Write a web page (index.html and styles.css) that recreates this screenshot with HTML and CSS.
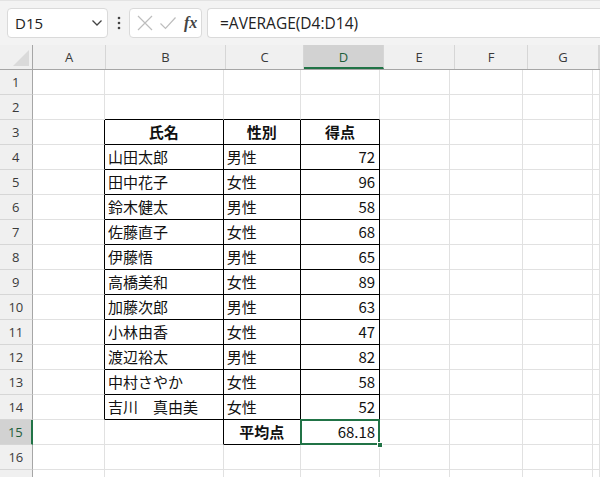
FILE: index.html
```html
<html>

<head>
    <link rel="stylesheet" href="styles.css">
</head>

<body>
    <div class="toolbar">
        <div class="namebox">
            <span>D15</span>
            <svg width="12" height="8" viewBox="0 0 12 8"><path d="M1.5 1.5 L6 6 L10.5 1.5" fill="none" stroke="#444" stroke-width="1.3"/></svg>
        </div>
        <div class="dots">
            <svg width="4" height="14" viewBox="0 0 4 14"><circle cx="2" cy="2" r="1.3" fill="#444"/><circle cx="2" cy="7" r="1.3" fill="#444"/><circle cx="2" cy="12" r="1.3" fill="#444"/></svg>
        </div>
        <div class="editbox">
            <svg width="18" height="18" viewBox="0 0 18 18"><path d="M2 2 L16 16 M16 2 L2 16" stroke="#bdbdbd" stroke-width="1.2"/></svg>
            <svg width="18" height="18" viewBox="0 0 18 18"><path d="M1.5 9.5 L6.5 14.5 L16.5 3.5" fill="none" stroke="#bdbdbd" stroke-width="1.2"/></svg>
            <span class="fx">fx</span>
        </div>
        <div class="formula">=AVERAGE(D4:D14)</div>
    </div>

    <div class="sheet">
        <div class="row head">
            <div class="corner"><div class="tri"></div></div>
            <div class="ch wa">A</div>
            <div class="ch wb">B</div>
            <div class="ch wc">C</div>
            <div class="ch wd sel">D</div>
            <div class="ch we">E</div>
            <div class="ch wf">F</div>
            <div class="ch wg">G</div>
            <div class="ch wh"></div>
        </div>
        <div class="row">
            <div class="rh">1</div>
            <div class="c wa"></div><div class="c wb"></div><div class="c wc"></div><div class="c wd"></div>
            <div class="c we"></div><div class="c wf"></div><div class="c wg"></div><div class="c wh"></div>
        </div>
        <div class="row">
            <div class="rh">2</div>
            <div class="c wa"></div><div class="c wb bb"></div><div class="c wc bb"></div><div class="c wd bb"></div>
            <div class="c we"></div><div class="c wf"></div><div class="c wg"></div><div class="c wh"></div>
        </div>
        <div class="row">
            <div class="rh">3</div>
            <div class="c wa rb"></div>
            <div class="c wb rb bb th">氏名</div>
            <div class="c wc rb bb th">性別</div>
            <div class="c wd rb bb th">得点</div>
            <div class="c we"></div><div class="c wf"></div><div class="c wg"></div><div class="c wh"></div>
        </div>
        <div class="row">
            <div class="rh">4</div>
            <div class="c wa rb"></div>
            <div class="c wb rb bb">山田太郎</div><div class="c wc rb bb">男性</div><div class="c wd rb bb num">72</div>
            <div class="c we"></div><div class="c wf"></div><div class="c wg"></div><div class="c wh"></div>
        </div>
        <div class="row">
            <div class="rh">5</div>
            <div class="c wa rb"></div>
            <div class="c wb rb bb">田中花子</div><div class="c wc rb bb">女性</div><div class="c wd rb bb num">96</div>
            <div class="c we"></div><div class="c wf"></div><div class="c wg"></div><div class="c wh"></div>
        </div>
        <div class="row">
            <div class="rh">6</div>
            <div class="c wa rb"></div>
            <div class="c wb rb bb">鈴木健太</div><div class="c wc rb bb">男性</div><div class="c wd rb bb num">58</div>
            <div class="c we"></div><div class="c wf"></div><div class="c wg"></div><div class="c wh"></div>
        </div>
        <div class="row">
            <div class="rh">7</div>
            <div class="c wa rb"></div>
            <div class="c wb rb bb">佐藤直子</div><div class="c wc rb bb">女性</div><div class="c wd rb bb num">68</div>
            <div class="c we"></div><div class="c wf"></div><div class="c wg"></div><div class="c wh"></div>
        </div>
        <div class="row">
            <div class="rh">8</div>
            <div class="c wa rb"></div>
            <div class="c wb rb bb">伊藤悟</div><div class="c wc rb bb">男性</div><div class="c wd rb bb num">65</div>
            <div class="c we"></div><div class="c wf"></div><div class="c wg"></div><div class="c wh"></div>
        </div>
        <div class="row">
            <div class="rh">9</div>
            <div class="c wa rb"></div>
            <div class="c wb rb bb">高橋美和</div><div class="c wc rb bb">女性</div><div class="c wd rb bb num">89</div>
            <div class="c we"></div><div class="c wf"></div><div class="c wg"></div><div class="c wh"></div>
        </div>
        <div class="row">
            <div class="rh">10</div>
            <div class="c wa rb"></div>
            <div class="c wb rb bb">加藤次郎</div><div class="c wc rb bb">男性</div><div class="c wd rb bb num">63</div>
            <div class="c we"></div><div class="c wf"></div><div class="c wg"></div><div class="c wh"></div>
        </div>
        <div class="row">
            <div class="rh">11</div>
            <div class="c wa rb"></div>
            <div class="c wb rb bb">小林由香</div><div class="c wc rb bb">女性</div><div class="c wd rb bb num">47</div>
            <div class="c we"></div><div class="c wf"></div><div class="c wg"></div><div class="c wh"></div>
        </div>
        <div class="row">
            <div class="rh">12</div>
            <div class="c wa rb"></div>
            <div class="c wb rb bb">渡辺裕太</div><div class="c wc rb bb">男性</div><div class="c wd rb bb num">82</div>
            <div class="c we"></div><div class="c wf"></div><div class="c wg"></div><div class="c wh"></div>
        </div>
        <div class="row">
            <div class="rh">13</div>
            <div class="c wa rb"></div>
            <div class="c wb rb bb">中村さやか</div><div class="c wc rb bb">女性</div><div class="c wd rb bb num">58</div>
            <div class="c we"></div><div class="c wf"></div><div class="c wg"></div><div class="c wh"></div>
        </div>
        <div class="row">
            <div class="rh">14</div>
            <div class="c wa rb"></div>
            <div class="c wb rb bb">吉川　真由美</div><div class="c wc rb bb">女性</div><div class="c wd rb bb num">52</div>
            <div class="c we"></div><div class="c wf"></div><div class="c wg"></div><div class="c wh"></div>
        </div>
        <div class="row">
            <div class="rh selrow">15</div>
            <div class="c wa"></div>
            <div class="c wb rb"></div>
            <div class="c wc rb bb th">平均点</div>
            <div class="c wd rb bb num active">68.18<div class="handle"></div></div>
            <div class="c we"></div><div class="c wf"></div><div class="c wg"></div><div class="c wh"></div>
        </div>
        <div class="row">
            <div class="rh">16</div>
            <div class="c wa"></div><div class="c wb"></div><div class="c wc"></div><div class="c wd"></div>
            <div class="c we"></div><div class="c wf"></div><div class="c wg"></div><div class="c wh"></div>
        </div>
        <div class="row">
            <div class="rh"></div>
            <div class="c wa"></div><div class="c wb"></div><div class="c wc"></div><div class="c wd"></div>
            <div class="c we"></div><div class="c wf"></div><div class="c wg"></div><div class="c wh"></div>
        </div>
    </div>
</body>

</html>
```

FILE: styles.css
```css
* {
    margin: 0;
    box-sizing: border-box;
}

body {
    width: 600px;
    height: 477px;
    overflow: hidden;
    background: #fff;
    font-family: "Noto Sans CJK JP", "Noto Sans", sans-serif;
}

.toolbar {
    height: 45px;
    background: #f3f3f3;
    border-top: 1px solid #e3e3e3;
    display: flex;
    align-items: center;
    padding-left: 7px;
}

.namebox {
    width: 101px;
    height: 30px;
    background: #fff;
    border: 1px solid #dadada;
    border-radius: 4px;
    display: flex;
    align-items: center;
    justify-content: space-between;
    padding: 0 4px 0 7px;
    font-family: "Open Sans", "Noto Sans", sans-serif;
    font-size: 15px;
    color: #222;
}

.dots {
    width: 21px;
    display: flex;
    justify-content: center;
}

.editbox {
    width: 73px;
    height: 30px;
    background: #fff;
    border: 1px solid #dadada;
    border-radius: 4px;
    display: flex;
    align-items: center;
    padding-left: 6px;
    gap: 5px;
}

.fx {
    font-family: "Liberation Serif", serif;
    font-style: italic;
    font-weight: bold;
    font-size: 16px;
    color: #444;
    margin-left: 2px;
}

.formula {
    flex: 1;
    height: 30px;
    margin-left: 5px;
    background: #fff;
    border: 1px solid #dadada;
    border-right: none;
    border-radius: 4px 0 0 4px;
    padding-left: 12px;
    line-height: 28px;
    font-family: "Open Sans", "Noto Sans", sans-serif;
    font-size: 15.5px;
    color: #222;
}

.row {
    display: flex;
    height: 25px;
    flex-shrink: 0;
}

.head {
    height: 25px;
    background: #f0f0f0;
    border-bottom: 1px solid #a6a6a6;
}

.corner {
    width: 33px;
    border-right: 1px solid #a6a6a6;
    position: relative;
}

.tri {
    position: absolute;
    right: 3px;
    bottom: 3px;
    width: 0;
    height: 0;
    border-left: 16px solid transparent;
    border-bottom: 16px solid #dadada;
}

.ch {
    border-right: 1px solid #d6d6d6;
    text-align: center;
    line-height: 24px;
    font-family: "Open Sans", "Noto Sans", sans-serif;
    font-size: 13px;
    color: #3a3a3a;
}

.ch.sel {
    background: #d2d2d2;
    border-bottom: 2px solid #217346;
    color: #1e5e3a;
}

.rh {
    width: 33px;
    background: #f0f0f0;
    border-right: 1px solid #a6a6a6;
    border-bottom: 1px solid #d6d6d6;
    text-align: center;
    line-height: 24px;
    font-family: "Open Sans", "Noto Sans", sans-serif;
    font-size: 13px;
    color: #3a3a3a;
}

.rh.selrow {
    background: #d2d2d2;
    border-right: 2px solid #217346;
    color: #1e5e3a;
}

.wa { width: 73px; }
.wb { width: 120px; }
.wc { width: 78px; }
.wd { width: 80px; }
.we { width: 71px; }
.wf { width: 73px; }
.wg { width: 71px; }
.wh { flex: 1; }

.c {
    border-right: 1px solid #e1e1e1;
    border-bottom: 1px solid #e1e1e1;
    padding: 0 3px;
    font-size: 15px;
    line-height: 24px;
    color: #111;
    white-space: nowrap;
}

.rb { border-right-color: #000; }
.bb { border-bottom-color: #000; }

.th {
    text-align: center;
    font-weight: bold;
}

.num {
    text-align: right;
    padding-right: 4px;
}

.active {
    position: relative;
}

.active::before {
    content: "";
    position: absolute;
    left: -1px;
    top: -1px;
    right: -1px;
    bottom: -1px;
    border: 2px solid #217346;
}

.handle {
    position: absolute;
    right: -4px;
    bottom: -4px;
    width: 6px;
    height: 6px;
    background: #217346;
    border: 1px solid #fff;
}
```
